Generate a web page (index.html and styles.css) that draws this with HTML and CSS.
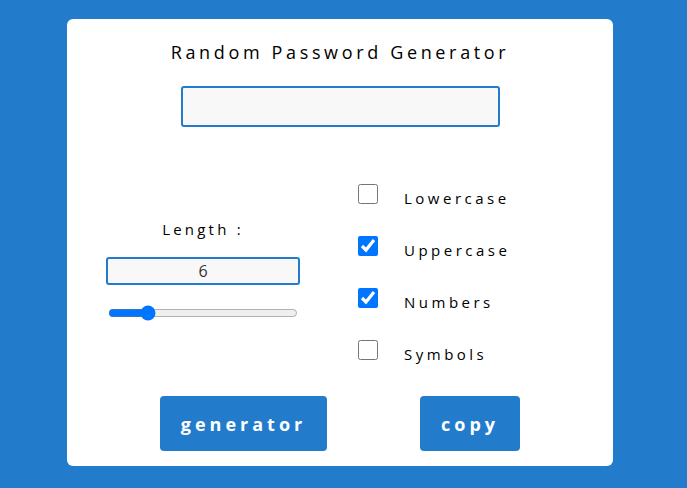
FILE: index.html
```html
<!DOCTYPE html>
<html>
<head>
<meta charset="utf-8">
<link rel="stylesheet" href="styles.css">
</head>
<body>
<div class="card">
  <h1 class="title">Random Password Generator</h1>
  <input class="password" type="text">
  <div class="options">
    <div class="length">
      <label class="length-label">Length :</label>
      <input class="length-input" type="text" value="6">
      <input class="slider" type="range" min="4" max="15" value="6">
    </div>
    <div class="checks">
      <label class="check"><input type="checkbox"><span>Lowercase</span></label>
      <label class="check"><input type="checkbox" checked><span>Uppercase</span></label>
      <label class="check"><input type="checkbox" checked><span>Numbers</span></label>
      <label class="check"><input type="checkbox"><span>Symbols</span></label>
    </div>
  </div>
  <div class="buttons">
    <button class="btn btn-gen">generator</button>
    <button class="btn btn-copy">copy</button>
  </div>
</div>
</body>
</html>
```
FILE: styles.css
```css
html, body {
  margin: 0;
  padding: 0;
}
body {
  background: #237bcb;
  font-family: "Open Sans", sans-serif;
  height: 488px;
  overflow: hidden;
  padding-top: 19px;
  box-sizing: border-box;
}
.card {
  margin-left: 67px;
  width: 546px;
  height: 447px;
  background: #fff;
  border-radius: 6px;
  display: flex;
  flex-direction: column;
  align-items: center;
  box-sizing: border-box;
  padding-top: 21px;
}
.title {
  margin: 0;
  font-size: 18px;
  font-weight: 400;
  letter-spacing: 3.65px;
  line-height: 25px;
  color: #000;
}
.password {
  margin-top: 21px;
  width: 319px;
  height: 41px;
  box-sizing: border-box;
  border: 2px solid #237bcb;
  border-radius: 3px;
  background: #f8f8f8;
  outline: none;
}
.options {
  align-self: stretch;
  display: flex;
  margin-top: 57px;
}
.length {
  width: 194px;
  margin-left: 39px;
  display: flex;
  flex-direction: column;
  align-items: center;
  padding-top: 35px;
}
.length-label {
  font-size: 15px;
  letter-spacing: 3.2px;
  line-height: 20px;
  color: #000;
}
.length-input {
  margin-top: 18px;
  width: 194px;
  height: 28px;
  box-sizing: border-box;
  border: 2px solid #237bcb;
  border-radius: 3px;
  background: #f8f8f8;
  text-align: center;
  font-family: "Open Sans", sans-serif;
  font-size: 16px;
  color: #333;
  outline: none;
  padding: 0;
}
.slider {
  margin: 20px 0 0;
  width: 190px;
}
.checks {
  margin-left: 58px;
  display: flex;
  flex-direction: column;
  gap: 28px;
}
.check {
  display: flex;
  align-items: flex-start;
  font-size: 15px;
  letter-spacing: 3.5px;
  color: #000;
}
.check span {
  margin-top: 4px;
  line-height: 20px;
}
.check input {
  width: 20px;
  height: 20px;
  margin: 0 26px 0 0;
}
.buttons {
  display: flex;
  margin-top: 32px;
  align-self: stretch;
}
.btn {
  height: 55px;
  border: none;
  border-radius: 4px;
  background: #237bcb;
  color: #fff;
  font-family: "Open Sans", sans-serif;
  font-weight: 700;
  font-size: 18px;
  letter-spacing: 4px;
  padding: 0;
}
.btn-gen {
  width: 167px;
  margin-left: 93px;
}
.btn-copy {
  width: 100px;
  margin-left: 93px;
}
```
